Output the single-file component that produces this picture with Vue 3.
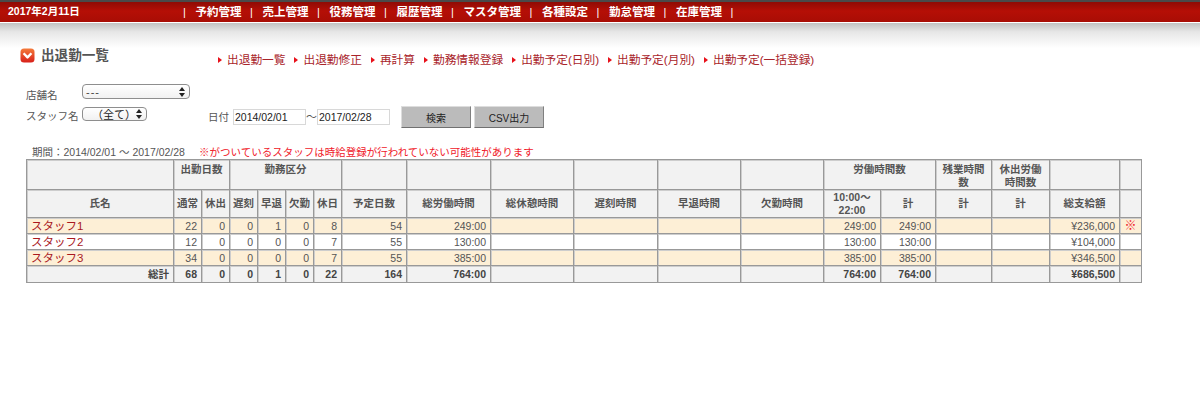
<script setup>
const nav = ['予約管理','売上管理','役務管理','履歴管理','マスタ管理','各種設定','勤怠管理','在庫管理']
const links = ['出退勤一覧','出退勤修正','再計算','勤務情報登録','出勤予定(日別)','出勤予定(月別)','出勤予定(一括登録)']
const widths = [147,28,28,28,28,28,28,65,84,83,84,83,83,57,55,56,58,70,22]
const h2 = ['通常','休出','遅刻','早退','欠勤','休日','予定日数','総労働時間','総休憩時間','遅刻時間','早退時間','欠勤時間']
const rows = [
  { name:'スタッフ1', v:['22','0','0','1','0','8','54','249:00','','','','','249:00','249:00','','','¥236,000'], mark:'※' },
  { name:'スタッフ2', v:['12','0','0','0','0','7','55','130:00','','','','','130:00','130:00','','','¥104,000'], mark:'' },
  { name:'スタッフ3', v:['34','0','0','0','0','7','55','385:00','','','','','385:00','385:00','','','¥346,500'], mark:'' },
]
const total = ['68','0','0','1','0','22','164','764:00','','','','','764:00','764:00','','','¥686,500']
</script>

<template>
  <div class="page">
    <header class="topbar">
      <span class="date">2017年2月11日</span>
      <nav class="menu">
        <span class="sep">|</span>
        <template v-for="n in nav" :key="n">
          <a class="menu-item">{{ n }}</a><span class="sep">|</span>
        </template>
      </nav>
    </header>
    <div class="shade"></div>

    <div class="title-row">
      <h1 class="title">
        <svg class="title-icon" width="15" height="15" viewBox="0 0 15 15">
          <defs>
            <linearGradient id="ig" x1="0" y1="0" x2="0" y2="1">
              <stop offset="0" stop-color="#f47a3a"/>
              <stop offset="1" stop-color="#d8201a"/>
            </linearGradient>
          </defs>
          <rect x="0.5" y="0.5" width="14" height="14" rx="3.5" fill="url(#ig)"/>
          <path d="M3.6 5.2 L7.5 9.4 L11.4 5.2" fill="none" stroke="#fff" stroke-width="2.4" stroke-linejoin="round"/>
        </svg>
        出退勤一覧
      </h1>
      <ul class="links">
        <li v-for="l in links" :key="l" class="link"><i class="tri"></i>{{ l }}</li>
      </ul>
    </div>

    <div class="form">
      <div class="fields">
        <div class="field first">
          <label class="lbl">店舗名</label>
          <div class="sel wide"><span class="dash">---</span>
            <svg width="6" height="10" viewBox="0 0 6 10"><path d="M3 0 L6 4 H0 Z M3 10 L0 6 H6 Z" fill="#222"/></svg>
          </div>
        </div>
        <div class="field second">
          <label class="lbl">スタッフ名</label>
          <div class="sel narrow"><span class="all">（全て）</span>
            <svg width="6" height="10" viewBox="0 0 6 10"><path d="M3 0 L6 4 H0 Z M3 10 L0 6 H6 Z" fill="#222"/></svg>
          </div>
        </div>
      </div>
      <div class="dates">
        <label class="lbl">日付</label>
        <input class="date-in" value="2014/02/01" />
        <span class="tilde">〜</span>
        <input class="date-in" value="2017/02/28" />
      </div>
      <div class="buttons">
        <button class="btn">検索</button>
        <button class="btn">CSV出力</button>
      </div>
    </div>

    <div class="notes">
      <span class="period">期間：2014/02/01 〜 2017/02/28</span>
      <span class="warn">※がついているスタッフは時給登録が行われていない可能性があります</span>
    </div>

    <table class="grid">
      <colgroup>
        <col v-for="(w,i) in widths" :key="i" :style="{ width: w + 'px' }" />
      </colgroup>
      <thead>
        <tr class="h1">
          <th></th>
          <th colspan="2">出勤日数</th>
          <th colspan="4">勤務区分</th>
          <th></th><th></th><th></th><th></th><th></th><th></th>
          <th colspan="2">労働時間数</th>
          <th>残業時間<br>数</th>
          <th>休出労働<br>時間数</th>
          <th></th><th></th>
        </tr>
        <tr class="h2">
          <th>氏名</th>
          <th v-for="h in h2" :key="h">{{ h }}</th>
          <th>10:00〜<br>22:00</th>
          <th>計</th><th>計</th><th>計</th>
          <th>総支給額</th>
          <th></th>
        </tr>
      </thead>
      <tbody>
        <tr v-for="(r,i) in rows" :key="r.name" :class="{ odd: i % 2 === 0 }">
          <td class="name">{{ r.name }}</td>
          <td v-for="(c,j) in r.v" :key="j" class="num">{{ c }}</td>
          <td class="mark">{{ r.mark }}</td>
        </tr>
        <tr class="total">
          <td class="num">総計</td>
          <td v-for="(c,j) in total" :key="j" class="num">{{ c }}</td>
          <td></td>
        </tr>
      </tbody>
    </table>
  </div>
</template>

<style>
html, body { margin: 0; background: #fff; }
</style>

<style scoped>
.page {
  width: 1200px;
  height: 400px;
  overflow: hidden;
  font-family: "Liberation Sans", "Noto Sans CJK JP", sans-serif;
  color: #555;
  font-size: 10.5px;
}
.topbar {
  height: 20px;
  padding-bottom: 0;
  border-top: 2px solid #4a4a4a;
  border-bottom: 1px solid #fff;
  background: linear-gradient(#8f0b05, #b50f06 45%, #a80d05);
  display: flex;
  align-items: flex-start;
  color: #fff;
  font-weight: 700;
  box-sizing: content-box;
  line-height: 16px;
}
.date { width: 183px; padding-left: 8px; box-sizing: border-box; font-size: 10.5px; margin-top: 1px; }
.menu { display: flex; align-items: center; font-size: 11.5px; margin-top: 2px; }
.sep { width: 3px; font-size: 11px; font-weight: 400; text-align: center; }
.menu-item { padding: 0 8.5px 0 9.5px; white-space: nowrap; }
.shade {
  height: 25px;
  background: linear-gradient(#c2c2c2, #e6e6e6 35%, #fff);
}
.title-row {
  display: flex;
  align-items: flex-start;
  height: 34px;
}
.title {
  margin: 0;
  width: 218px;
  padding: 0 0 0 20px;
  box-sizing: border-box;
  display: flex;
  align-items: center;
  gap: 6px;
  font-size: 13.6px;
  line-height: 15px;
  color: #555;
  font-weight: 700;
}
.title-icon { flex: none; }
.links {
  display: flex;
  gap: 9px;
  list-style: none;
  margin: 0;
  padding: 4px 0 0;
  font-size: 11.7px;
  line-height: 16px;
  color: #a9242a;
  white-space: nowrap;
}
.link { display: flex; align-items: center; }
.tri {
  width: 0; height: 0;
  border-left: 4px solid #e8101a;
  border-top: 3.5px solid transparent;
  border-bottom: 3.5px solid transparent;
  margin-right: 5px;
}
.form {
  display: flex;
  align-items: flex-start;
  padding-left: 26px;
  height: 64px;
}
.fields { width: 182px; padding-top: 2px; }
.field { display: flex; align-items: center; }
.first { height: 15px; margin-bottom: 7px; }
.second { height: 15px; }
.lbl { width: 56px; color: #555; line-height: 14px; padding-top: 6px; flex: none; }
.second .lbl { padding-top: 4px; }
.sel {
  box-sizing: border-box;
  border: 1px solid #8e8e8e;
  border-radius: 4px;
  background: linear-gradient(#fff, #f1f1f1);
  display: flex;
  align-items: center;
  justify-content: space-between;
  padding: 0 4px 0 3px;
  color: #222;
  font-size: 11px;
}
.wide { width: 108px; height: 15px; }
.narrow { width: 65px; height: 14px; }
.dash { letter-spacing: 1px; color: #444; }
.all { padding-left: 6px; }
.dates {
  display: flex;
  align-items: center;
  width: 193px;
  margin-top: 27px;
  height: 16px;
}
.dates .lbl { width: 25px; padding-top: 0; }
.date-in {
  box-sizing: border-box;
  width: 73px;
  height: 16px;
  border: 1px solid #d8d8d8;
  padding: 0 0 0 1px;
  font: 10.5px "Liberation Sans", sans-serif;
  color: #222;
  background: #fff;
}
.tilde { width: 11px; text-align: center; font-size: 11px; line-height: 14px; }
.buttons { display: flex; gap: 3px; margin-top: 24px; }
.btn {
  box-sizing: border-box;
  width: 70px;
  height: 22px;
  border: 1px solid;
  border-color: #ddd #808080 #707070 #ddd;
  background: #bbb;
  font: 10px "Liberation Sans", "Noto Sans CJK JP", sans-serif;
  color: #222;
  padding: 0;
}
.notes {
  padding-left: 32px;
  height: 13px;
  line-height: 13px;
  display: flex;
  white-space: nowrap;
}
.period { width: 167px; }
.warn { color: #f0202a; }
.grid {
  margin-left: 26px;
  width: 1116px;
  table-layout: fixed;
  border-collapse: collapse;
  border: 1px solid #999;
  line-height: 13px;
}
.grid th, .grid td {
  border: 1px solid #999;
  box-sizing: border-box;
  padding: 0 2px;
  overflow: hidden;
  box-shadow: inset 1px 1px 0 #cdcdcd;
}
.grid th { background: #f2f2f2; font-weight: 700; color: #555; text-align: center; }
.h1 { height: 30px; }
.h1 th { vertical-align: top; padding-top: 3px; }
.h2 { height: 28px; }
.grid tbody tr { height: 16px; }
.grid tbody td { padding-top: 1px; }
.grid .total { height: 17px; }
.grid .odd td { background: #fdefd6; }
.grid .total td { background: #f2f2f2; font-weight: 700; color: #444; }
.grid .name { color: #a9181e; font-size: 11.5px; padding-left: 4px; white-space: nowrap; }
.grid .num { text-align: right; padding-right: 4px; white-space: nowrap; }
.grid .mark { color: #f0202a; text-align: center; font-size: 12px; font-weight: 700; }
</style>
